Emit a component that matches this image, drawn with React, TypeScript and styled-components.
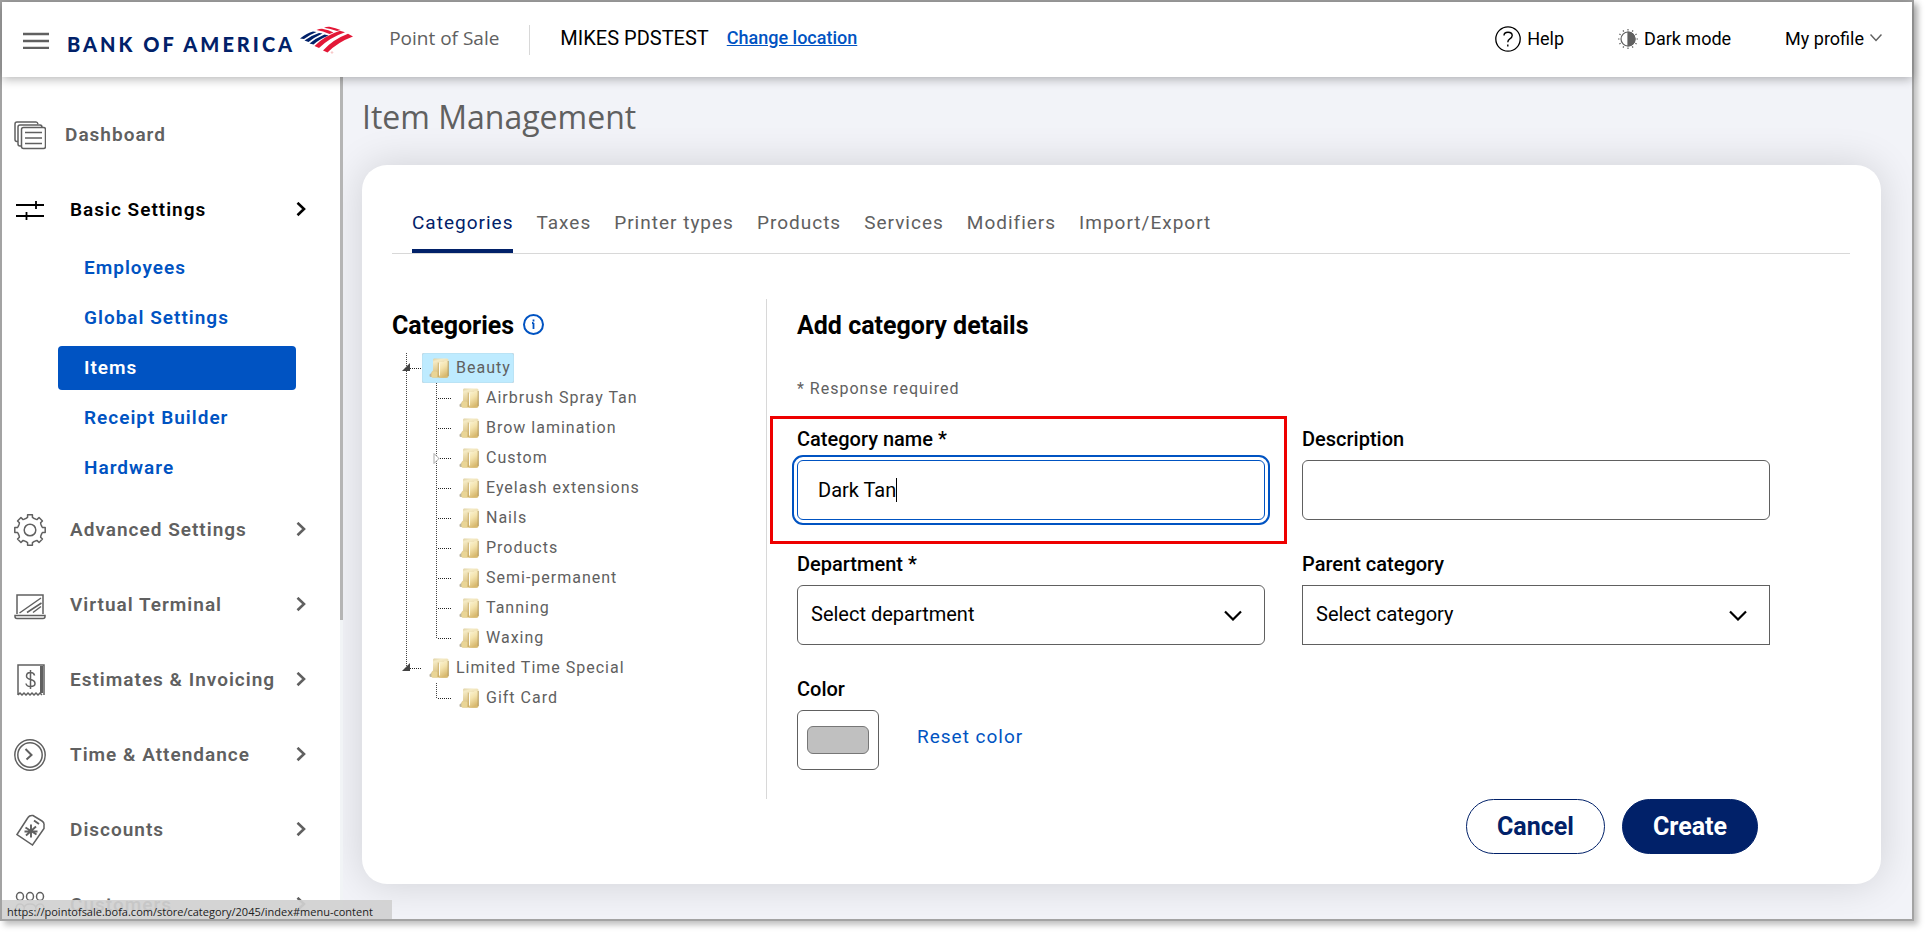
import React from "react";
import styled, { createGlobalStyle, css } from "styled-components";

const navy = "#012169";
const blue = "#0053c2";
const grey = "#606060";

const GlobalStyle = createGlobalStyle`
  *, *::before, *::after { box-sizing: border-box; }
  body {
    margin: 0;
    background: #fff;
    color: #000;
    font-family: Roboto, "Liberation Sans", sans-serif;
  }
  ul { list-style: none; margin: 0; padding: 0; }
  a { color: inherit; text-decoration: none; }
  button, input, select { font: inherit; color: inherit; }
  h1, h2, p { margin: 0; }
`;

const Page = styled.div`
  height: 100vh;
  padding: 0 12px 12px 0;
`;

const Frame = styled.div`
  position: relative;
  display: flex;
  flex-direction: column;
  height: 100%;
  border: 2px solid #a3a3a3;
  box-shadow: 4px 4px 6px rgba(0, 0, 0, 0.25);
`;

/* Header */

const Header = styled.header`
  z-index: 1;
  display: flex;
  align-items: center;
  flex: 0 0 75px;
  padding: 0 30px 0 21px;
  background: #fff;
  box-shadow: 0 2px 10px rgba(0, 0, 0, 0.3);
  font-size: 18px;
  line-height: 24px;
  white-space: nowrap;
`;

const IconButton = styled.button`
  display: flex;
  padding: 0;
  border: 0;
  background: none;
  cursor: pointer;
`;

const Brand = styled.a`
  display: flex;
  align-items: center;
  gap: 5px;
  margin-left: 18px;
  color: ${navy};
  font: 900 20px/24px Lato, sans-serif;
  letter-spacing: 3px;

  span { padding-top: 8px; }
`;

const Product = styled.span`
  height: 30px;
  margin-left: 36px;
  padding-right: 30px;
  border-right: 1px solid #d8d8d8;
  color: ${grey};
  font: 400 19px/26px "Open Sans", sans-serif;
`;

const Merchant = styled.span`
  margin-left: 30px;
  padding-bottom: 4px;
  font-size: 20px;
`;

const LocationLink = styled.a`
  margin-left: 18px;
  padding-bottom: 4px;
  color: ${blue};
  font-weight: 500;
  text-decoration: underline;
`;

const HeaderActions = styled.div`
  display: flex;
  align-items: center;
  gap: 54px;
  margin-left: auto;
  padding-bottom: 2px;
`;

const HeaderAction = styled.button`
  display: flex;
  align-items: center;
  gap: 6px;
  padding: 0;
  border: 0;
  background: none;
  cursor: pointer;
`;

/* Sidebar */

const Body = styled.div`
  display: flex;
  flex: 1;
  min-height: 0;
`;

const Sidebar = styled.aside`
  display: flex;
  flex: 0 0 341px;
  background: #fff;
`;

const Nav = styled.nav`
  flex: 1;
  overflow: hidden;
  padding: 23px 34px 0 12px;
  font-size: 19px;
  font-weight: 600;
  line-height: 24px;
  letter-spacing: 1px;
`;

const Rail = styled.div`
  flex: 0 0 3px;
  background: #f1f4f6;
`;

const Thumb = styled.div`
  height: 64.5%;
  background: #b5b5b5;
`;

const NavList = styled.ul`
  display: flex;
  flex-direction: column;
  gap: 5px;
`;

const NavRow = styled.a<{ $active?: boolean; $tight?: boolean }>`
  display: flex;
  align-items: center;
  gap: ${(p) => (p.$tight ? 19 : 24)}px;
  height: 70px;
  color: ${(p) => (p.$active ? "#000" : grey)};
  white-space: nowrap;

  svg { flex: none; }
`;

const NavText = styled.span`
  flex: 1;
  width: 0;
`;

const SubList = styled.ul`
  display: flex;
  flex-direction: column;
  gap: 6px;
  padding: 1px 10px 0 44px;
`;

const SubLink = styled.a<{ $current?: boolean }>`
  display: flex;
  align-items: center;
  height: 44px;
  padding-left: 26px;
  border-radius: 4px;
  background: ${(p) => (p.$current ? blue : "transparent")};
  color: ${(p) => (p.$current ? "#fff" : blue)};
`;

/* Main content */

const Main = styled.main`
  flex: 1;
  min-width: 0;
  overflow: hidden;
  padding: 17px 31px 0 19px;
  background: #f2f3f8;
`;

const Title = styled.h1`
  color: ${grey};
  font: 400 32px/46px "Open Sans", sans-serif;
`;

const Card = styled.section`
  margin-top: 25px;
  padding: 37px 31px 30px 30px;
  border-radius: 25px;
  background: #fff;
  box-shadow: 0 0 40px rgba(0, 0, 0, 0.14);
`;

const Tabs = styled.nav`
  display: flex;
  gap: 23px;
  padding-left: 20px;
  border-bottom: 1px solid #d8d8d8;
`;

const Tab = styled.a<{ $current?: boolean }>`
  padding: 9px 0 14px;
  border-bottom: 4px solid ${(p) => (p.$current ? navy : "transparent")};
  color: ${(p) => (p.$current ? navy : grey)};
  font-size: 19px;
  line-height: 24px;
  letter-spacing: 1px;
`;

const Columns = styled.div`
  display: flex;
  margin-top: 45px;
  min-height: 500px;
`;

const TreePane = styled.div`
  flex: 0 0 375px;
  border-right: 1px solid #d8d8d8;
`;

const Heading = styled.h2`
  display: flex;
  gap: 9px;
  padding: 13px 0;
  font-size: 25px;
  line-height: 28px;
  font-weight: 700;

  svg { margin-top: 2px; }
`;

const TreeGroup = styled.ul`
  & & { padding-left: 30px; }
`;

const TreeItem = styled.li`
  background: repeating-linear-gradient(to bottom, #444 0 1px, transparent 1px 2px) 14px 0 / 1px 100% no-repeat;

  &:last-child { background-size: 1px 16px; }
`;

const TreeRow = styled.div`
  display: flex;
  height: 30px;
`;

const TreeLabel = styled.a<{ $selected?: boolean }>`
  display: flex;
  align-items: center;
  gap: 7px;
  padding: 0 3px 0 7px;
  border-radius: 2px;
  background: ${(p) => (p.$selected ? "#beebff" : "transparent")};
  box-shadow: ${(p) => (p.$selected ? "inset 0 0 1px #999" : "none")};
  color: ${grey};
  font-size: 16px;
  line-height: 24px;
  letter-spacing: 1px;
  white-space: nowrap;
`;

const FormPane = styled.form`
  flex: 1;
  padding: 0 80px 0 30px;
`;

const Hint = styled.p`
  padding: 24px 0 26px;
  color: ${grey};
  font-size: 16px;
  line-height: 24px;
  letter-spacing: 1px;
`;

const Fields = styled.div`
  display: grid;
  grid-template-columns: 1fr 1fr;
  gap: 32px 37px;
`;

const Field = styled.div`
  position: relative;
  display: flex;
  flex-direction: column;
  gap: 9px;
`;

const Label = styled.label`
  font-size: 20px;
  line-height: 24px;
  font-weight: 500;
`;

const Highlight = styled.div`
  position: absolute;
  inset: -11px -22px -24px -27px;
  border: 3px solid #ee0000;
  pointer-events: none;
`;

const Caret = styled.div`
  position: absolute;
  left: 99px;
  bottom: 18px;
  width: 1px;
  height: 24px;
  background: #000;
`;

const control = css`
  width: 100%;
  height: 60px;
  border: 1px solid #606060;
  border-radius: 6px;
  background: #fff;
  font-size: 20px;
`;

const TextInput = styled.input<{ $focused?: boolean }>`
  ${control}
  padding: 0 20px;
  outline: none;
  ${(p) =>
    p.$focused &&
    css`
      border-color: ${blue};
      outline: 2px solid ${blue};
      outline-offset: 3px;
    `}
`;

const SelectWrap = styled.div`
  display: grid;
  align-items: center;

  > * { grid-area: 1 / 1; }
  svg { justify-self: end; margin-right: 23px; pointer-events: none; }
`;

const Select = styled.select<{ $square?: boolean }>`
  ${control}
  appearance: none;
  padding: 0 13px 2px;
  border-radius: ${(p) => (p.$square ? 0 : 6)}px;
`;

const ColorRow = styled.div`
  display: flex;
  align-items: center;
  gap: 38px;
`;

const ColorInput = styled.input`
  ${control}
  appearance: none;
  width: 82px;
  padding: 15px 9px;

  &::-webkit-color-swatch-wrapper { padding: 0; }
  &::-webkit-color-swatch { border: 1px solid #777; border-radius: 6px; }
`;

const ResetButton = styled.button`
  padding: 0 0 6px;
  border: 0;
  background: none;
  color: ${blue};
  font-size: 19px;
  line-height: 24px;
  letter-spacing: 1px;
  cursor: pointer;
`;

const Actions = styled.div`
  display: flex;
  justify-content: flex-end;
  gap: 17px;
  padding-right: 92px;
`;

const PillButton = styled.button<{ $primary?: boolean }>`
  height: 55px;
  padding: 0 30px;
  border: 1px solid ${navy};
  border-radius: 28px;
  background: ${(p) => (p.$primary ? navy : "#fff")};
  color: ${(p) => (p.$primary ? "#fff" : navy)};
  font-size: 25px;
  font-weight: 700;
  cursor: pointer;
`;

const StatusBar = styled.div`
  position: absolute;
  left: 0;
  bottom: 0;
  z-index: 2;
  padding: 4px 19px 0 5px;
  background: rgba(208, 208, 208, 0.92);
  color: #222;
  font: 400 11px/15px "Open Sans", sans-serif;
`;

/* Icons */

const Line = styled.svg`
  display: block;
  fill: none;
  stroke: currentColor;
  stroke-width: 2;
`;

const BurgerIcon = () => (
  <Line width="26" height="18" viewBox="0 0 26 18">
    <path stroke={grey} strokeWidth="2.400" d="M0 3h26M0 10h26M0 17h26" />
  </Line>
);

const FlagIcon = () => (
  <svg width="53" height="28" viewBox="0 0 53 28" aria-hidden="true">
    <g fill={navy}>
      <path d="M0 12.500Q7 7 13 5.500L16.500 6Q9 9 4 13Z" />
      <path d="M4.500 14.500Q11 9.500 19 7L22.500 7.500Q14 11.500 8.500 16Z" />
      <path d="M9.500 17.500Q16 12 24.500 8.500L28.500 9.500Q19 13.500 13.500 18.500Z" />
    </g>
    <g fill="#e31837">
      <path d="M24 1.800Q27 .5 29.500 .8Q36 2 40.500 4L37 5Q30 2.500 24 1.800Z" />
      <path d="M16.500 4Q19 2.800 22 2.800Q29 4 33.500 6.500L29.500 8Q23 5 16.500 4Z" />
      <path d="M14.500 20Q25 9.500 40 4.800L45 6.300Q30 11.500 19 22Z" />
      <path d="M23 24.500Q33 13.500 48 7.800L53 10.500Q38 16 27.500 26.500Z" />
    </g>
    <circle cx="32" cy="26.500" r="0.800" fill="none" stroke="#e88" strokeWidth="0.500" />
  </svg>
);

const HelpIcon = () => (
  <Line width="26" height="26" viewBox="0 0 26 26">
    <circle cx="13" cy="13" r="12.200" strokeWidth="1.300" />
    <path strokeWidth="1.400" d="M9 9.500Q9 6.300 13 6.300Q17.200 6.300 17.200 9.600Q17.200 11.500 14.800 12.800Q12.800 13.900 12.800 16.200M12.800 18.500v2" />
  </Line>
);

const DarkIcon = () => (
  <Line width="20" height="20" viewBox="0 0 20 20">
    <g stroke={grey} strokeWidth="1.200">
      <circle cx="10" cy="10" r="7" />
      <path fill={grey} d="M10 3a7 7 0 0 1 0 14z" />
      {Array.from({ length: 12 }, (_, i) => (
        <path key={i} d="M10 0v1.500" transform={`rotate(${i * 30} 10 10)`} />
      ))}
    </g>
  </Line>
);

const ProfileChevron = () => (
  <Line width="12" height="16" viewBox="0 0 12 16">
    <path stroke={grey} strokeWidth="1.500" d="M.5 3.500l5.500 6 5.500-6" />
  </Line>
);

const RightChevron = () => (
  <Line width="10" height="16" viewBox="0 0 10 16">
    <path strokeWidth="2.600" d="M1.500 .8l6.500 6.200-6.500 6.200" />
  </Line>
);

const DownChevron = () => (
  <Line width="18" height="12" viewBox="0 0 18 12">
    <path strokeWidth="2.200" d="M1 2.500l8 8 8-8" />
  </Line>
);

const InfoIcon = () => (
  <Line width="21" height="21" viewBox="0 0 21 21" aria-label="Category information">
    <g stroke={blue}>
      <circle cx="10.500" cy="10.500" r="9.500" />
      <path d="M10.500 9v6M10.500 5.500v2M9 9h1.500" strokeWidth="1.800" />
    </g>
  </Line>
);

const gearPoints = Array.from({ length: 8 }, (_, i) =>
  [
    [-17, 12.3],
    [-11, 12.8],
    [-9, 15.4],
    [9, 15.4],
    [11, 12.8],
    [17, 12.3],
  ].map(([a, r]) => {
    const t = ((i * 45 + a) * Math.PI) / 180;
    return `${(16 + r * Math.sin(t)).toFixed(2)},${(16 - r * Math.cos(t)).toFixed(2)}`;
  })
).flat().join(" ");

const icons: Record<string, React.ReactNode> = {
  dashboard: (
    <>
      <rect x="7.500" y="8.500" width="24" height="21" rx="2" />
      <path d="M7.500 27H6q-2 0-2-2V8q0-2 2-2h20q2 0 2 2.500M4 22.500H3q-2 0-2-2V5q0-2 2-2h19q1.500 0 2 2M11 13.500h17M11 19h17M11 24.500h17" />
    </>
  ),
  basic: <path strokeWidth="1.800" d="M2 11h28M2 22h28M22 7v8M12.500 18v8" />,
  advanced: (
    <>
      <polygon points={gearPoints} strokeLinejoin="round" />
      <circle cx="16" cy="16" r="5.800" />
    </>
  ),
  terminal: (
    <path d="M3 25V6h26v19M1 26.500h30v1q0 2-2 2H3q-2 0-2-2zM5.500 24L27 9M13 23.500L27.500 14M19 23.500l8-6" />
  ),
  estimates: (
    <>
      <path d="M4 31V1h26v30M4 31l2-2 2 2 2-2 2 2 2-2 2 2 2-2 2 2 2-2 2 2 2-2 2 2" />
      <path d="M27.500 2v27" strokeWidth="3" />
      <path d="M20.500 11.500Q20 8.500 16.500 8.500Q12.500 8.500 12.500 12Q12.500 14.500 16.500 15.500Q21 16.500 21 19.500Q21 22.500 16.500 22.500Q12.500 22.500 12 19.500M16.500 6v19" />
    </>
  ),
  time: (
    <>
      <circle cx="16" cy="16" r="15.200" />
      <circle cx="16" cy="16" r="12.200" />
      <path d="M11.500 10l6 6-5 4.500" strokeWidth="2" />
    </>
  ),
  discounts: (
    <>
      <path d="M3 20.500L14 3.500q1.500-2.500 5-2L28 7q2.500 1.500 2 4.500v3L18.500 31z" />
      <path d="M17 10.500v13M11.500 13.500l11 7M10.500 17.500h13M12 21.500l10-9M20 6.500l5 3.500" strokeWidth="1.900" />
    </>
  ),
  customers: (
    <>
      <ellipse cx="6" cy="7.500" rx="3.500" ry="4" />
      <ellipse cx="16" cy="7.500" rx="3.500" ry="4" />
      <ellipse cx="26" cy="7.500" rx="3.500" ry="4" />
      <path d="M2 28v-8q0-5 4-5 3 0 4 3M10 28v-8q0-5 6-5t6 5v8M22 18q1-3 4-3 4 0 4 5v8" />
    </>
  ),
};

const NavIcon = ({ name }: { name: string }) => (
  <Line width="32" height="32" viewBox="0 0 32 32" aria-hidden="true">
    <g strokeWidth="1.500">{icons[name]}</g>
  </Line>
);

const FolderIcon = () => (
  <svg width="20" height="20" viewBox="0 0 20 20" aria-hidden="true">
    <defs>
      <linearGradient id="folder" x1="0" y1="0" x2="0.3" y2="1">
        <stop offset="0" stopColor="#d9cb9c" />
        <stop offset="0.2" stopColor="#f5ebc6" />
        <stop offset="1" stopColor="#d2b46c" />
      </linearGradient>
      <linearGradient id="folderFront" x1="0" y1="0" x2="0.4" y2="1">
        <stop offset="0" stopColor="#fdf6d8" />
        <stop offset="0.5" stopColor="#f3e2ac" />
        <stop offset="1" stopColor="#d8b96f" />
      </linearGradient>
    </defs>
    <path d="M.5 16.500l3-2.500v5H2q-1.500 0-1.500-1z" fill="#b9b3a2" />
    <path d="M5 .5h13q1.500 0 1.500 1.500v16q0 1.500-1.500 1.500H4q-1.500 0-1.500-1.500V14l1.500-1.500V2Q4 .5 5 .5z" fill="url(#folder)" />
    <path d="M9.500 4h5q1 0 1-1.200h2.500q1 0 1 1V18q0 1.800-1.500 1.800h-7q-1 0-1-1z" fill="url(#folderFront)" />
    <path d="M2.500 15.500l1.500-2h3q1.500 0 1.500 1.500v4.500H3.500q-1 0-1-1z" fill="#e9d596" />
    <path d="M9.300 4.500v14.500" stroke="#bf9f58" strokeWidth="0.700" />
    <path d="M10.500 5.500v12" stroke="#fffdf0" strokeWidth="1" />
    <path d="M19.200 3v15" stroke="#a88d50" strokeWidth="0.800" />
  </svg>
);

const Branch = ({ toggle }: { toggle?: "open" | "closed" }) => (
  <svg width="30" height="30" viewBox="0 0 30 30" aria-hidden="true">
    <g fill="#222" shapeRendering="crispEdges">
      {[16, 18, 20, 22, 24, 26, 28].map((x) => (
        <rect key={x} x={x} y="15" width="1" height="1" />
      ))}
    </g>
    {toggle === "open" && <path d="M10 18l8-8V18z" fill="#444" />}
    {toggle === "closed" && <path d="M12 10.500v10l5-5z" fill="#fff" stroke="#aaa" />}
  </svg>
);

/* Data */

const subItems = ["Employees", "Global Settings", "Items", "Receipt Builder", "Hardware"];

const navItems = [
  { label: "Dashboard", icon: "dashboard" },
  { label: "Basic Settings", icon: "basic", children: subItems },
  { label: "Advanced Settings", icon: "advanced" },
  { label: "Virtual Terminal", icon: "terminal" },
  { label: "Estimates & Invoicing", icon: "estimates" },
  { label: "Time & Attendance", icon: "time" },
  { label: "Discounts", icon: "discounts" },
  { label: "Customers", icon: "customers" },
];

const tabs = ["Categories", "Taxes", "Printer types", "Products", "Services", "Modifiers", "Import/Export"];

type Node = { name: string; toggle?: "open" | "closed"; children?: Node[] };

const tree: Node[] = [
  {
    name: "Beauty",
    toggle: "open",
    children: [
      { name: "Airbrush Spray Tan" },
      { name: "Brow lamination" },
      { name: "Custom", toggle: "closed" },
      { name: "Eyelash extensions" },
      { name: "Nails" },
      { name: "Products" },
      { name: "Semi-permanent" },
      { name: "Tanning" },
      { name: "Waxing" },
    ],
  },
  { name: "Limited Time Special", toggle: "open", children: [{ name: "Gift Card" }] },
];

const Tree = ({ nodes }: { nodes: Node[] }) => (
  <TreeGroup>
    {nodes.map((node) => (
      <TreeItem key={node.name}>
        <TreeRow>
          <Branch toggle={node.toggle} />
          <TreeLabel href="#menu-content" $selected={node.name === "Beauty"}>
            <FolderIcon />
            {node.name}
          </TreeLabel>
        </TreeRow>
        {node.children && <Tree nodes={node.children} />}
      </TreeItem>
    ))}
  </TreeGroup>
);

export default function App() {
  return (
    <Page>
      <GlobalStyle />
      <Frame>
        <Header>
          <IconButton aria-label="Menu">
            <BurgerIcon />
          </IconButton>
          <Brand href="#home">
            <span>BANK OF AMERICA</span>
            <FlagIcon />
          </Brand>
          <Product>Point of Sale</Product>
          <Merchant>MIKES PDSTEST</Merchant>
          <LocationLink href="#location">Change location</LocationLink>
          <HeaderActions>
            <HeaderAction>
              <HelpIcon />
              Help
            </HeaderAction>
            <HeaderAction>
              <DarkIcon />
              Dark mode
            </HeaderAction>
            <HeaderAction>
              My profile
              <ProfileChevron />
            </HeaderAction>
          </HeaderActions>
        </Header>
        <Body>
          <Sidebar>
            <Nav>
              <NavList>
                {navItems.map((item) => (
                  <li key={item.label}>
                    <NavRow
                      href={`#${item.icon}`}
                      $active={!!item.children}
                      $tight={item.icon === "dashboard"}
                    >
                      <NavIcon name={item.icon} />
                      <NavText>{item.label}</NavText>
                      {item.icon !== "dashboard" && <RightChevron />}
                    </NavRow>
                    {item.children && (
                      <SubList>
                        {item.children.map((label) => (
                          <li key={label}>
                            <SubLink href="#menu-content" $current={label === "Items"}>
                              {label}
                            </SubLink>
                          </li>
                        ))}
                      </SubList>
                    )}
                  </li>
                ))}
              </NavList>
            </Nav>
            <Rail>
              <Thumb />
            </Rail>
          </Sidebar>
          <Main>
            <Title>Item Management</Title>
            <Card>
              <Tabs>
                {tabs.map((tab) => (
                  <Tab key={tab} href="#menu-content" $current={tab === "Categories"}>
                    {tab}
                  </Tab>
                ))}
              </Tabs>
              <Columns>
                <TreePane>
                  <Heading>
                    Categories
                    <InfoIcon />
                  </Heading>
                  <Tree nodes={tree} />
                </TreePane>
                <FormPane id="category-form">
                  <Heading>Add category details</Heading>
                  <Hint>* Response required</Hint>
                  <Fields>
                    <Field>
                      <Label htmlFor="name">Category name *</Label>
                      <TextInput id="name" defaultValue="Dark Tan" $focused />
                      <Caret />
                      <Highlight />
                    </Field>
                    <Field>
                      <Label htmlFor="description">Description</Label>
                      <TextInput id="description" />
                    </Field>
                    <Field>
                      <Label htmlFor="department">Department *</Label>
                      <SelectWrap>
                        <Select id="department">
                          <option>Select department</option>
                        </Select>
                        <DownChevron />
                      </SelectWrap>
                    </Field>
                    <Field>
                      <Label htmlFor="parent">Parent category</Label>
                      <SelectWrap>
                        <Select id="parent" $square>
                          <option>Select category</option>
                        </Select>
                        <DownChevron />
                      </SelectWrap>
                    </Field>
                    <Field>
                      <Label htmlFor="color">Color</Label>
                      <ColorRow>
                        <ColorInput id="color" type="color" defaultValue="#c0c0c0" />
                        <ResetButton type="button">Reset color</ResetButton>
                      </ColorRow>
                    </Field>
                  </Fields>
                </FormPane>
              </Columns>
              <Actions>
                <PillButton type="button">Cancel</PillButton>
                <PillButton type="submit" form="category-form" $primary>
                  Create
                </PillButton>
              </Actions>
            </Card>
          </Main>
        </Body>
        <StatusBar>https://pointofsale.bofa.com/store/category/2045/index#menu-content</StatusBar>
      </Frame>
    </Page>
  );
}
